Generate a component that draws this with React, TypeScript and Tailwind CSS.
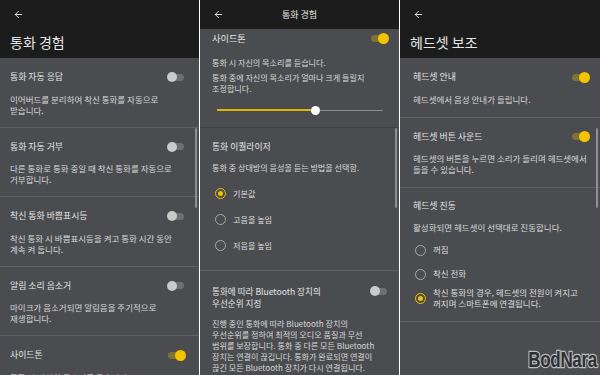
import { ArrowLeft } from "lucide-react";

type Item = { title: string; desc: string[]; on?: boolean };

const callItems: Item[] = [
  { title: "통화 자동 응답", desc: ["이어버드를 분리하여 착신 통화를 자동으로", "받습니다."] },
  { title: "통화 자동 거부", desc: ["다른 통화로 통화 중일 때 착신 통화를 자동으로", "거부합니다."] },
  { title: "착신 통화 바쁨표시등", desc: ["착신 통화 시 바쁨표시등을 켜고 통화 시간 동안", "계속 켜 둡니다."] },
  { title: "알림 소리 음소거", desc: ["마이크가 음소거되면 알림음을 주기적으로", "재생합니다."] },
  { title: "사이드톤", desc: ["통화 시 자신의 목소리를 듣습니다."], on: true },
];

const headsetItems: Item[] = [
  { title: "헤드셋 안내", desc: ["헤드셋에서 음성 안내가 들립니다."], on: true },
  { title: "헤드셋 버튼 사운드", desc: ["헤드셋의 버튼을 누르면 소리가 들리며 헤드셋에서", "들을 수 있습니다."], on: true },
];

function Toggle({ on }: { on?: boolean }) {
  if (on) {
    return (
      <div className="relative h-[7px] w-[16px] shrink-0 rounded-full bg-[#7f7233]">
        <div className="absolute right-[-2px] top-[-2px] h-[11px] w-[11px] rounded-full bg-[#f5c400]" />
      </div>
    );
  }
  return (
    <div className="relative h-[7px] w-[16px] shrink-0 rounded-full bg-[#6e6f72]">
      <div className="absolute left-[-1px] top-[-1.5px] h-[10px] w-[10px] rounded-full bg-[#cacaca]" />
    </div>
  );
}

function Radio({ checked }: { checked?: boolean }) {
  if (checked) {
    return (
      <span className="flex h-[11px] w-[11px] shrink-0 items-center justify-center rounded-full border-[1.5px] border-[#f2c200]">
        <span className="h-[5px] w-[5px] rounded-full bg-[#f2c200]" />
      </span>
    );
  }
  return <span className="h-[11px] w-[11px] shrink-0 rounded-full border-[1.2px] border-[#a8a8a8]" />;
}

function Lines({ lines, className }: { lines: string[]; className?: string }) {
  return (
    <p className={className}>
      {lines.map((l) => (
        <span key={l} className="block whitespace-nowrap">
          {l}
        </span>
      ))}
    </p>
  );
}

function Row({ item, pl, pr, pb }: { item: Item; pl: string; pr: string; pb: string }) {
  return (
    <div className={`border-b border-[#5f6064] pt-[13px] ${pl} ${pr} ${pb}`}>
      <div className="flex h-[12px] items-center justify-between">
        <span className="text-[8.9px] leading-[12px] text-[#e4e4e4]">{item.title}</span>
        <Toggle on={item.on} />
      </div>
      <Lines lines={item.desc} className="mt-[10.5px] text-[8.5px] leading-[11px] text-[#d8d8d8]" />
    </div>
  );
}

function Scrollbar() {
  return <div className="absolute right-[2px] top-[128px] h-[80px] w-[2px] rounded-full bg-[#8e8f92]" />;
}

function BigHeader({ title }: { title: string }) {
  return (
    <header className="h-[58px] shrink-0 bg-[#1c1c1c] px-[10px] pt-[9px]">
      <ArrowLeft size={11} strokeWidth={2} className="ml-[3px] text-[#e8e8e8]" />
      <h1 className="mt-[13px] text-[14px] leading-[18px] text-[#e6e6e6]">{title}</h1>
    </header>
  );
}

function CallPanel() {
  return (
    <div className="relative flex w-[199px] shrink-0 flex-col overflow-hidden bg-[#4b4c50]">
      <BigHeader title="통화 경험" />
      {callItems.map((it) => (
        <Row key={it.title} item={it} pl="pl-[10px]" pr="pr-[15px]" pb="pb-[11px]" />
      ))}
      <Scrollbar />
    </div>
  );
}

function DetailPanel() {
  const eq = ["기본값", "고음을 높임", "저음을 높임"];
  return (
    <div className="relative flex w-[199px] shrink-0 flex-col overflow-hidden bg-[#4b4c50]">
      <header className="relative flex h-[29px] shrink-0 items-center justify-center bg-[#1c1c1c]">
        <ArrowLeft size={11} strokeWidth={2} className="absolute left-[13px] top-[9px] text-[#e8e8e8]" />
        <span className="text-[9px] text-[#e2e2e2]">통화 경험</span>
      </header>

      <div className="border-b border-[#3f4044] pl-[12px] pr-[12px] pt-[3px] pb-[12px]">
        <div className="flex h-[12px] items-center justify-between">
          <span className="text-[9.2px] leading-[12px] text-[#e6e6e6]">사이드톤</span>
          <Toggle on />
        </div>
        <p className="mt-[12.5px] text-[8.1px] leading-[11px] text-[#d8d8d8]">통화 시 자신의 목소리를 듣습니다.</p>
        <Lines
          lines={["통화 중에 자신의 목소리가 얼마나 크게 들릴지", "조정합니다."]}
          className="mt-[4px] text-[8.1px] leading-[11px] text-[#d8d8d8]"
        />
        <div className="ml-[5px] mr-[4px] mt-[11.5px] flex h-[10px] items-center">
          <div className="h-[1.5px] w-[94px] bg-[#e0b400]" />
          <div className="h-[9px] w-[9px] shrink-0 rounded-full bg-white" />
          <div className="h-px flex-1 bg-[#8a8b8e]" />
        </div>
      </div>

      <div className="border-b border-[#5f6064] pl-[12px] pr-[12px] pt-[13px] pb-[12px]">
        <span className="block text-[8.8px] leading-[12px] text-[#e4e4e4]">통화 이퀄라이저</span>
        <p className="mt-[8.5px] text-[8.1px] leading-[11px] text-[#d8d8d8]">통화 중 상대방의 음성을 듣는 방법을 선택함.</p>
        <div className="mt-[7.5px] flex flex-col">
          {eq.map((e, i) => (
            <div key={e} className="ml-[3px] flex min-h-[26px] items-center gap-[7px]">
              <Radio checked={i === 0} />
              <span className="text-[8.1px] leading-[11px] text-[#dedede]">{e}</span>
            </div>
          ))}
        </div>
      </div>

      <div className="pl-[12px] pr-[12px] pt-[14px]">
        <div className="flex items-start justify-between">
          <Lines
            lines={["통화에 따라 Bluetooth 장치의", "우선순위 지정"]}
            className="text-[8.6px] leading-[12px] text-[#e4e4e4]"
          />
          <div className="mt-[2.5px]">
            <Toggle />
          </div>
        </div>
        <Lines
          lines={[
            "진행 중인 통화에 따라 Bluetooth 장치의",
            "우선순위를 정하여 최적의 오디오 품질과 무선",
            "범위를 보장합니다. 통화 중 다른 모든 Bluetooth",
            "장치는 연결이 끊깁니다. 통화가 완료되면 연결이",
            "끊긴 모든 Bluetooth 장치가 다시 연결됩니다.",
          ]}
          className="mt-[9px] text-[8.1px] leading-[11.1px] text-[#d8d8d8]"
        />
      </div>
      <Scrollbar />
    </div>
  );
}

function HeadsetPanel() {
  const opts = [
    { label: ["꺼짐"] },
    { label: ["착신 전화"] },
    { label: ["착신 통화의 경우, 헤드셋의 전원이 켜지고", "꺼지며 스마트폰에 연결됩니다."], checked: true },
  ];
  return (
    <div className="relative flex flex-1 flex-col overflow-hidden bg-[#4b4c50]">
      <BigHeader title="헤드셋 보조" />
      {headsetItems.map((it) => (
        <Row key={it.title} item={it} pl="pl-[13px]" pr="pr-[12px]" pb="pb-[12px]" />
      ))}
      <div className="border-b border-[#5f6064] pl-[13px] pr-[12px] pt-[12px] pb-[11px]">
        <span className="block text-[8.9px] leading-[12px] text-[#e4e4e4]">헤드셋 진동</span>
        <p className="mt-[10px] text-[8.5px] leading-[11px] text-[#d8d8d8]">활성화되면 헤드셋이 선택대로 진동합니다.</p>
        <div className="mt-[5px] flex flex-col">
          {opts.map((o) => (
            <div key={o.label[0]} className="ml-[2px] flex min-h-[24px] items-center gap-[7px]">
              <Radio checked={o.checked} />
              <Lines lines={o.label} className="text-[8.5px] leading-[11.5px] text-[#dedede]" />
            </div>
          ))}
        </div>
      </div>
      <Scrollbar />
      <div className="absolute bottom-[4px] right-[3px] origin-bottom scale-y-[1.3] font-['Liberation_Sans',sans-serif] text-[17px] font-bold leading-none tracking-[-0.3px] text-[#2e2f33] [-webkit-text-stroke:2px_#bcbcbc] [paint-order:stroke_fill]">
        BodNara
      </div>
    </div>
  );
}

export default function App() {
  return (
    <div className="flex h-[375px] w-[600px] gap-px overflow-hidden bg-white font-['Noto_Sans_CJK_KR','Noto_Sans',sans-serif]">
      <CallPanel />
      <DetailPanel />
      <HeadsetPanel />
    </div>
  );
}
